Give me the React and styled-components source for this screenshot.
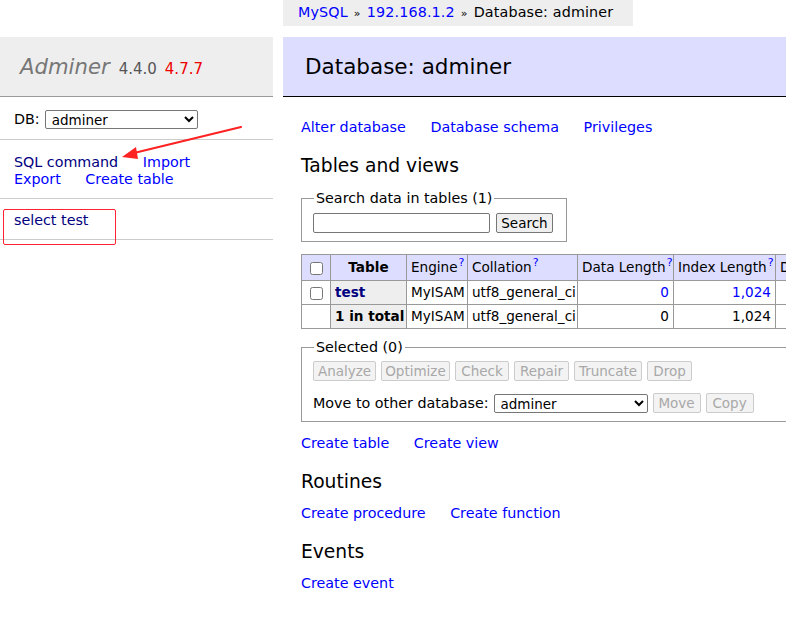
import React from 'react';
import styled, { createGlobalStyle } from 'styled-components';

const GlobalStyle = createGlobalStyle`
    html, body {
        margin: 0;
        padding: 0;
        background: #fff;
        overflow: hidden;
    }
    body {
        font: 14.3px/17px 'DejaVu Sans', Verdana, sans-serif;
        color: #000;
    }
`;

const Page = styled.div`
    position: relative;
    display: flex;
    width: 786px;
    height: 638px;
    overflow: hidden;
`;

// 왼쪽 메뉴
const Menu = styled.div`
    width: 273px;
    flex: none;
    padding-top: 37px;
`;

const Brand = styled.h1`
    margin: 0;
    height: 60px;
    box-sizing: border-box;
    padding: 0 0 0 20px;
    display: flex;
    align-items: center;
    gap: 8px;
    background: #eee;
    border-bottom: 1px solid #999;
    font-weight: normal;
    font-size: 21.2px;
    line-height: 25px;
`;

const BrandName = styled.span`
    font-style: italic;
    color: #777;
    margin-right: 1px;
`;

const Version = styled.span`
    font-size: 15px;
    color: ${(p) => (p.$new ? '#e00' : '#555')};
    margin-top: 5px;
`;

const MenuSection = styled.div`
    padding: ${(p) => p.$pad};
    border-bottom: 1px solid #ccc;
    position: relative;
`;

const DbRow = styled.div`
    display: flex;
    align-items: center;
    gap: 5px;
    height: 19px;
`;

const Select = styled.select`
    font: 13.5px 'DejaVu Sans', Verdana, sans-serif;
    width: ${(p) => p.$width}px;
    height: 19px;
    padding: 0 2px;
    border: 1px solid #767676;
    border-radius: 2px;
    background: #fff;
    color: #000;
`;

const LinkLine = styled.div`
    white-space: nowrap;
    line-height: 17px;
`;

const Link = styled.a`
    color: ${(p) => (p.$visited ? '#000080' : '#0000ff')};
    text-decoration: none;
    margin-right: ${(p) => (p.$gap ? p.$gap : 0)}px;
    font-weight: ${(p) => (p.$bold ? 'bold' : 'normal')};
`;

const Highlight = styled.div`
    position: absolute;
    left: 3px;
    top: 10px;
    width: 111px;
    height: 34px;
    border: 1px solid #f23;
    border-radius: 2px;
`;

// 오른쪽 본문
const Main = styled.div`
    flex: 1;
    min-width: 0;
    margin-left: 10px;
    overflow: hidden;
`;

const Breadcrumb = styled.div`
    display: inline-block;
    height: 26px;
    line-height: 25px;
    padding: 0 20px 0 15px;
    background: #eee;
    white-space: nowrap;
    margin-bottom: 11px;
    letter-spacing: 0.15px;
`;

const Sep = styled.span`
    color: #000;
    font-size: 11px;
    margin: 0 6px;
`;

const Title = styled.h2`
    margin: 0;
    height: 60px;
    box-sizing: border-box;
    display: flex;
    align-items: center;
    padding-left: 22px;
    background: #ddf;
    border-bottom: 1px solid #000;
    font-weight: normal;
    font-size: 21.5px;
`;

const Content = styled.div`
    padding-left: 18px;
    min-width: 700px;
`;

const Links = styled.p`
    margin: ${(p) => p.$top}px 0 0;
    white-space: nowrap;
    line-height: 17px;
`;

const Heading = styled.h3`
    margin: ${(p) => p.$top}px 0 0;
    font-weight: normal;
    font-size: 18.7px;
    line-height: 22px;
`;

const Fieldset = styled.fieldset`
    margin: ${(p) => p.$top}px 0 0;
    padding: ${(p) => p.$pad};
    border: 1px solid #999;
    width: ${(p) => p.$width}px;
    box-sizing: border-box;
    min-width: 0;
`;

const Legend = styled.legend`
    padding: 0 2px;
    margin-left: 1px;
    line-height: 17px;
`;

const Row = styled.div`
    display: flex;
    align-items: center;
    gap: ${(p) => p.$gap || 5}px;
    margin-top: ${(p) => p.$top || 0}px;
    white-space: nowrap;
`;

const TextInput = styled.input`
    width: 177px;
    height: 20px;
    box-sizing: border-box;
    border: 1px solid #767676;
    border-radius: 2px;
    padding: 0 3px;
`;

const Button = styled.button`
    font: 13.5px 'DejaVu Sans', Verdana, sans-serif;
    height: 20px;
    padding: 0;
    box-sizing: border-box;
    border-radius: 2px;
    border: 1px solid ${(p) => (p.disabled ? '#ccc' : '#767676')};
    background: ${(p) => (p.disabled ? '#f3f3f3' : '#efefef')};
    color: ${(p) => (p.disabled ? '#a8a8a8' : '#000')};
    width: ${(p) => p.$width}px;
    flex: none;
`;

const Table = styled.table`
    margin-top: 12px;
    border-collapse: collapse;
    table-layout: fixed;
    width: ${(p) => p.$width}px;
    white-space: nowrap;
    font-size: 13.6px;
`;

const Cell = styled.td`
    border: 1px solid #999;
    padding: 0 4px;
    height: ${(p) => (p.$head ? 26 : 24)}px;
    width: ${(p) => p.$width}px;
    box-sizing: border-box;
    background: ${(p) => p.$bg || 'transparent'};
    text-align: ${(p) => p.$align || 'left'};
    font-weight: ${(p) => (p.$bold ? 'bold' : 'normal')};
    color: ${(p) => p.$color || '#000'};
    overflow: hidden;
    line-height: 17px;
`;

const Check = styled.input`
    margin: 0;
    width: 13px;
    height: 13px;
    vertical-align: middle;
`;

const Help = styled.sup`
    color: #00f;
    font-size: 11px;
    line-height: 0;
    vertical-align: 6px;
    margin-left: 1px;
`;

const Arrow = styled.svg`
    position: absolute;
    left: 0;
    top: 0;
    pointer-events: none;
`;

const headers = [
    { label: 'Engine', width: 61 },
    { label: 'Collation', width: 110 },
    { label: 'Data Length', width: 96 },
    { label: 'Index Length', width: 102 },
    { label: 'Data Free', width: 90 },
    { label: 'Auto Increment', width: 120 },
    { label: 'Rows', width: 60 },
];
const tableWidth = 29 + 76 + headers.reduce((s, h) => s + h.width, 0);

const actions = [
    { label: 'Analyze', width: 63 },
    { label: 'Optimize', width: 69 },
    { label: 'Check', width: 54 },
    { label: 'Repair', width: 55 },
    { label: 'Truncate', width: 68 },
    { label: 'Drop', width: 45 },
];

const App = () => {
    return (
        <>
            <GlobalStyle />
            <Page>
                <Menu>
                    <Brand>
                        <BrandName>Adminer</BrandName>
                        <Version>4.4.0</Version>
                        <Version $new>4.7.7</Version>
                    </Brand>
                    <MenuSection $pad="13px 14px 10px">
                        <DbRow>
                            DB:
                            <Select $width={153} defaultValue="adminer">
                                <option>adminer</option>
                            </Select>
                        </DbRow>
                    </MenuSection>
                    <MenuSection $pad="14px 14px 10px">
                        <LinkLine>
                            <Link $visited $gap={20}>SQL command</Link> <Link>Import</Link>
                        </LinkLine>
                        <LinkLine>
                            <Link $gap={20}>Export</Link> <Link>Create table</Link>
                        </LinkLine>
                    </MenuSection>
                    <MenuSection $pad="13px 14px 10px">
                        <LinkLine>
                            <Link $visited>select test</Link>
                        </LinkLine>
                        <Highlight />
                    </MenuSection>
                </Menu>

                <Main>
                    <Breadcrumb>
                        <Link>MySQL</Link>
                        <Sep>»</Sep>
                        <Link>192.168.1.2</Link>
                        <Sep>»</Sep>
                        Database: adminer
                    </Breadcrumb>
                    <Title>Database: adminer</Title>
                    <Content>
                        <Links $top={22}>
                            <Link $gap={20}>Alter database</Link> <Link $gap={20}>Database schema</Link>{' '}
                            <Link>Privileges</Link>
                        </Links>
                        <Heading $top={19}>Tables and views</Heading>
                        <Fieldset $top={13} $width={266} $pad="6px 11px 8px">
                            <Legend>Search data in tables (1)</Legend>
                            <Row $gap={6}>
                                <TextInput type="text" />
                                <Button $width={57}>Search</Button>
                            </Row>
                        </Fieldset>
                        <Table $width={tableWidth}>
                            <thead>
                                <tr>
                                    <Cell $head $width={29} $bg="#ddf" $align="center">
                                        <Check type="checkbox" />
                                    </Cell>
                                    <Cell as="th" $head $width={76} $bg="#ddf" $align="center" $bold>
                                        Table
                                    </Cell>
                                    {headers.map((h) => (
                                        <Cell key={h.label} $head $width={h.width} $bg="#ddf">
                                            {h.label}
                                            <Help>?</Help>
                                        </Cell>
                                    ))}
                                </tr>
                            </thead>
                            <tbody>
                                <tr>
                                    <Cell $align="center">
                                        <Check type="checkbox" />
                                    </Cell>
                                    <Cell as="th" $bg="#eee" $bold>
                                        <Link $visited $bold>
                                            test
                                        </Link>
                                    </Cell>
                                    <Cell>MyISAM</Cell>
                                    <Cell>utf8_general_ci</Cell>
                                    <Cell $align="right" $color="#00f">
                                        0
                                    </Cell>
                                    <Cell $align="right" $color="#00f">
                                        1,024
                                    </Cell>
                                    <Cell $align="right" $color="#00f">
                                        0
                                    </Cell>
                                    <Cell></Cell>
                                    <Cell $align="right">1</Cell>
                                </tr>
                                <tr>
                                    <Cell></Cell>
                                    <Cell as="th" $bg="#eee" $bold>
                                        1 in total
                                    </Cell>
                                    <Cell>MyISAM</Cell>
                                    <Cell>utf8_general_ci</Cell>
                                    <Cell $align="right">0</Cell>
                                    <Cell $align="right">1,024</Cell>
                                    <Cell $align="right">0</Cell>
                                    <Cell></Cell>
                                    <Cell></Cell>
                                </tr>
                            </tbody>
                        </Table>
                        <Fieldset $top={10} $width={560} $pad="5px 11px 8px">
                            <Legend>Selected (0)</Legend>
                            <Row>
                                {actions.map((a) => (
                                    <Button key={a.label} disabled $width={a.width}>
                                        {a.label}
                                    </Button>
                                ))}
                            </Row>
                            <Row $top={12}>
                                Move to other database:
                                <Select $width={154} defaultValue="adminer">
                                    <option>adminer</option>
                                </Select>
                                <Button disabled $width={48}>
                                    Move
                                </Button>
                                <Button disabled $width={48}>
                                    Copy
                                </Button>
                            </Row>
                        </Fieldset>
                        <Links $top={13}>
                            <Link $gap={20}>Create table</Link> <Link>Create view</Link>
                        </Links>
                        <Heading $top={19}>Routines</Heading>
                        <Links $top={12}>
                            <Link $gap={20}>Create procedure</Link> <Link>Create function</Link>
                        </Links>
                        <Heading $top={19}>Events</Heading>
                        <Links $top={12}>
                            <Link>Create event</Link>
                        </Links>
                    </Content>
                </Main>

                <Arrow width="786" height="638" viewBox="0 0 786 638">
                    <line x1="241" y1="127" x2="134" y2="153" stroke="#f22" strokeWidth="2.2" strokeLinecap="round" />
                    <polygon points="122,157 136,147 138,159" fill="#f22" />
                </Arrow>
            </Page>
        </>
    );
};

export default App;
